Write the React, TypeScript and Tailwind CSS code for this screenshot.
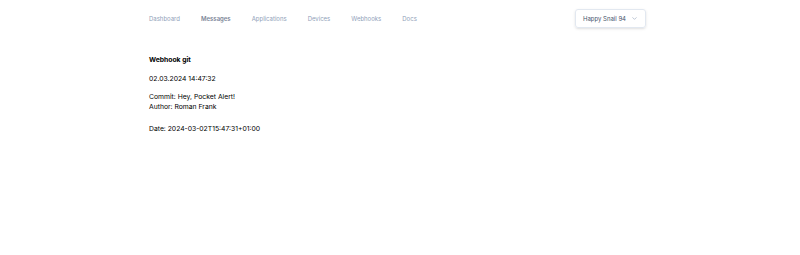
import { ChevronDown } from 'lucide-react';

const links = ['Dashboard', 'Messages', 'Applications', 'Devices', 'Webhooks', 'Docs'];

export default function App() {
  return (
    <div className="min-h-[255px] bg-white font-['Inter',sans-serif] text-black">
      <div className="ml-[149px] w-[497px]">
        <nav className="flex h-[37px] items-center justify-between">
          <div className="flex items-center gap-[21px]">
            {links.map((l) => (
              <a
                key={l}
                className={`text-[6px] ${
                  l === 'Messages' ? 'font-semibold text-[#7b8597]' : 'text-slate-400'
                }`}
              >
                {l}
              </a>
            ))}
          </div>
          <button className="flex h-[19px] items-center gap-[5px] rounded-[3px] border border-slate-200 px-[7px] text-[6px] text-slate-600 shadow-sm">
            Happy Snail 94
            <ChevronDown className="h-[7px] w-[7px] text-slate-400" strokeWidth={2} />
          </button>
        </nav>

        <div className="pt-[18px] text-[6.8px] leading-[10px]">
          <h2 className="font-bold">Webhook git</h2>
          <p className="mt-[9px]">02.03.2024 14:47:32</p>
          <div className="mt-[8px]">
            <p>Commit: Hey, Pocket Alert!</p>
            <p>Author: Roman Frank</p>
            <p className="mt-[12px]">Date: 2024-03-02T15:47:31+01:00</p>
          </div>
        </div>
      </div>
    </div>
  );
}
